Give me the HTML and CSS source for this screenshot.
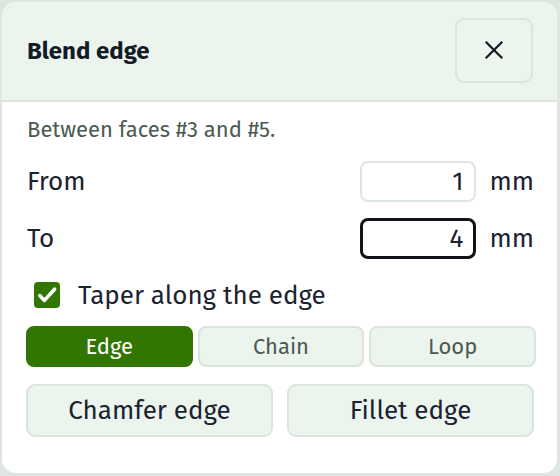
FILE: index.html
```html
<!DOCTYPE html>
<html>
<head>
<meta charset="utf-8">
<link rel="stylesheet" href="styles.css">
</head>
<body>
<div class="card">
  <div class="header">
    <h1 class="title">Blend edge</h1>
    <button class="close" aria-label="Close">
      <svg width="20" height="20" viewBox="0 0 20 20"><path d="M2.5 2.5 L17.5 17.5 M17.5 2.5 L2.5 17.5" stroke="#141b26" stroke-width="2.2" fill="none" stroke-linecap="square"/></svg>
    </button>
  </div>
  <div class="content">
    <p class="desc">Between faces #3 and #5.</p>
    <div class="row row-from">
      <span class="label">From</span>
      <div class="field"><span class="input">1</span><span class="unit">mm</span></div>
    </div>
    <div class="row row-to">
      <span class="label">To</span>
      <div class="field"><span class="input focused">4</span><span class="unit">mm</span></div>
    </div>
    <div class="check">
      <span class="box">
        <svg width="26" height="26" viewBox="0 0 26 26"><path d="M5.8 13.6 L10.4 18.4 L20.6 7.2" stroke="#fff" stroke-width="3.6" fill="none" stroke-linecap="round" stroke-linejoin="round"/></svg>
      </span>
      <span class="check-label">Taper along the edge</span>
    </div>
    <div class="segmented">
      <button class="seg active">Edge</button>
      <button class="seg">Chain</button>
      <button class="seg">Loop</button>
    </div>
    <div class="actions">
      <button class="action">Chamfer edge</button>
      <button class="action">Fillet edge</button>
    </div>
  </div>
</div>
</body>
</html>
```
FILE: styles.css
```css
* { box-sizing: border-box; }
html, body { margin: 0; padding: 0; }
body {
  background: #dfe6e1;
  font-family: "Fira Sans", "Open Sans", "Noto Sans", sans-serif;
  color: #1b2230;
  width: 560px;
  height: 476px;
  padding: 2px 3px 3px 2px;
}
.card {
  width: 555px;
  height: 471px;
  background: #ffffff;
  border-radius: 14px;
  overflow: hidden;
}
.header {
  height: 100px;
  background: #ebf5ed;
  border-bottom: 2px solid #dbe4dd;
  display: flex;
  align-items: center;
  justify-content: space-between;
  padding: 0 24px 0 25px;
}
.title {
  margin: 0;
  font-size: 24px;
  font-weight: 700;
  color: #141b26;
}
.close {
  width: 78px;
  height: 65px;
  margin-top: -2px;
  background: #ebf5ed;
  border: 2px solid #dbe4dd;
  border-radius: 9px;
  display: flex;
  align-items: center;
  justify-content: center;
  padding: 0;
}
.content {
  padding: 16px 23px 0 24px;
}
.desc {
  margin: 0 0 0 1px;
  font-size: 22px;
  line-height: 24px;
  color: #4c5a52;
}
.row {
  display: flex;
  align-items: center;
  justify-content: space-between;
  height: 41px;
  padding-left: 1px;
}
.row-from { margin-top: 19px; }
.row-to { margin-top: 16px; }
.label { font-size: 26px; }
.field {
  display: flex;
  align-items: center;
  gap: 13px;
}
.input {
  width: 116px;
  height: 41px;
  border: 2px solid #dde7df;
  border-radius: 8px;
  display: flex;
  align-items: center;
  justify-content: flex-end;
  padding-right: 11px;
  font-size: 26px;
}
.input.focused { border: 3px solid #111418; padding-right: 10px; }
.unit { font-size: 26px; }
.check {
  display: flex;
  align-items: center;
  gap: 18px;
  margin-top: 23px;
  padding-left: 8px;
  height: 26px;
}
.box {
  flex: none;
  width: 26px;
  height: 26px;
  background: #317600;
  border-radius: 4px;
  display: flex;
  align-items: center;
  justify-content: center;
}
.check-label { font-size: 26px; }
.segmented {
  display: grid;
  grid-template-columns: repeat(3, 1fr);
  gap: 5px;
  margin-top: 18px;
  width: 510px;
}
.seg {
  height: 41px;
  border: 2px solid #dbe4dd;
  background: #ebf5ed;
  border-radius: 8px;
  font-family: inherit;
  font-size: 22px;
  color: #4c5a52;
  padding: 0;
}
.seg.active {
  background: #317600;
  border-color: #317600;
  color: #ffffff;
}
.actions {
  display: grid;
  grid-template-columns: 1fr 1fr;
  gap: 14px;
  margin-top: 17px;
  width: 508px;
}
.action {
  height: 53px;
  border: 2px solid #dbe4dd;
  background: #ebf5ed;
  border-radius: 9px;
  font-family: inherit;
  font-size: 26px;
  color: #1b2230;
  padding: 0;
}
```
